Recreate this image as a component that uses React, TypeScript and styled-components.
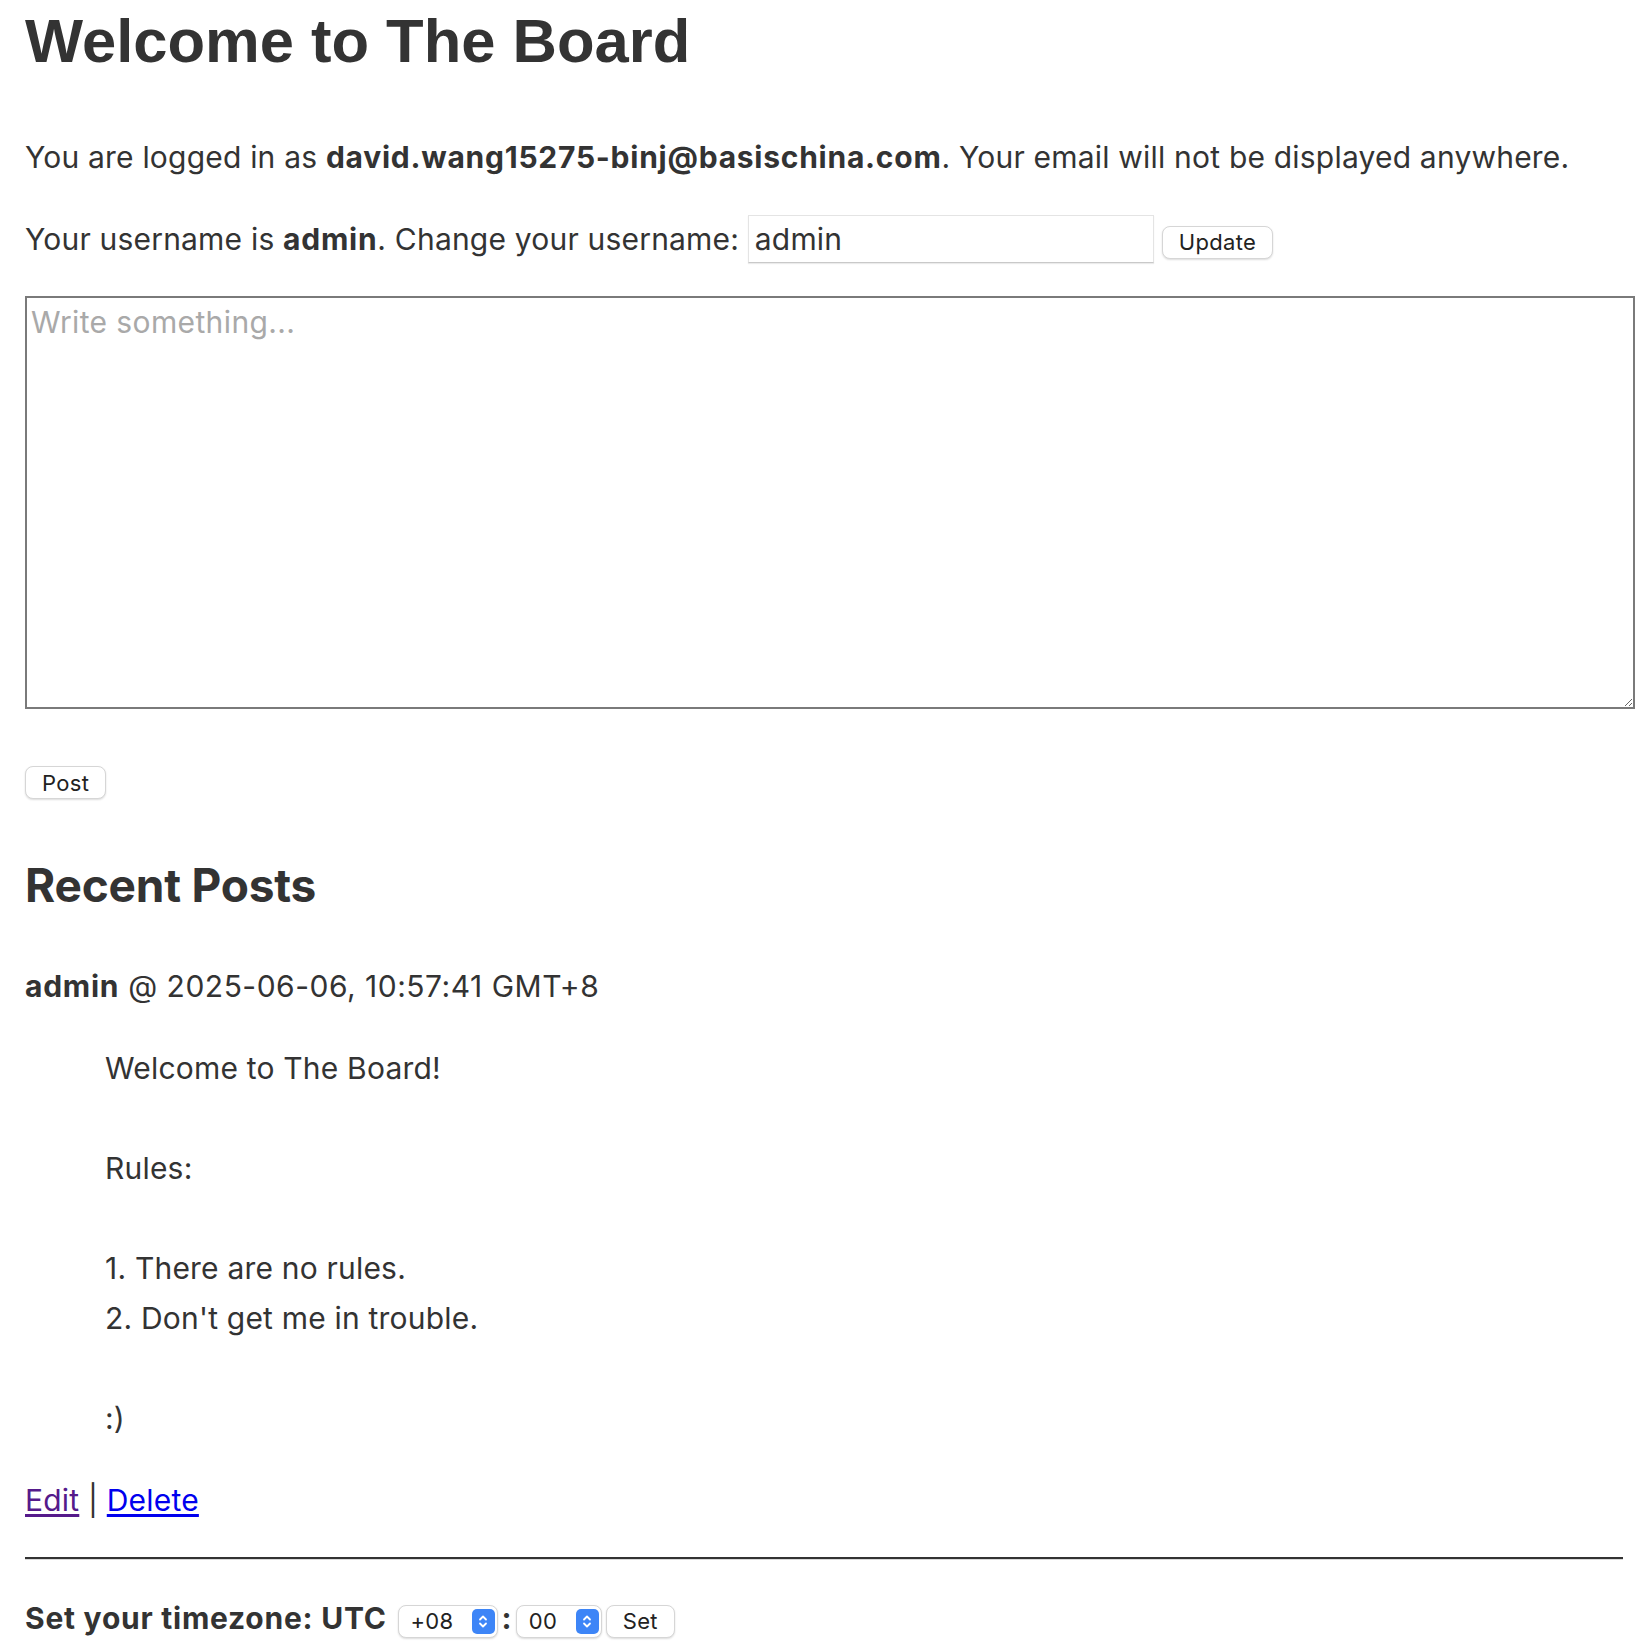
import React from 'react';
import styled, { createGlobalStyle } from 'styled-components';

const GlobalStyle = createGlobalStyle`
  body {
    margin: 0;
    background: #fff;
    color: #333;
    font-family: Inter, "Noto Sans", sans-serif;
    font-size: 30px;
    line-height: 50px;
    letter-spacing: 0.2px;
  }
`;

const Page = styled.div`
  display: flex;
  flex-direction: column;
  padding: 0 25px 20px;
`;

const Title = styled.h1`
  margin: 10px 0 0;
  font-family: 'Liberation Sans', Arial, sans-serif;
  font-size: 61.5px;
  line-height: 62px;
  font-weight: 700;
  letter-spacing: 0;
`;

const Text = styled.p`
  margin: 60px 0 0;
`;

const Row = styled.div<{ $top: number }>`
  display: flex;
  align-items: baseline;
  margin-top: ${(p) => p.$top}px;
`;

const Label = styled.span`
  white-space: pre;
`;

const Strong = styled.b`
  font-weight: 700;
  letter-spacing: 0.75px;
`;

const NameInput = styled.input`
  box-sizing: border-box;
  width: 406px;
  height: 48px;
  padding: 0 6px;
  border: 1px solid #e4e4e4;
  border-bottom-color: #c9c9c9;
  box-shadow: 0 1px 1px rgba(0, 0, 0, 0.08);
  font: inherit;
  line-height: normal;
  letter-spacing: inherit;
  color: #333;
  outline: none;
`;

const Button = styled.button<{ $gap?: number }>`
  box-sizing: border-box;
  height: 33px;
  margin-left: ${(p) => p.$gap ?? 0}px;
  padding: 0 16px;
  border: 1px solid #d6d6d6;
  border-radius: 8px;
  background: #fff;
  box-shadow: 0 1px 2px rgba(0, 0, 0, 0.14);
  font-family: Inter, sans-serif;
  font-size: 22px;
  line-height: normal;
  letter-spacing: 0.3px;
  color: #222;
`;

const PostButton = styled(Button)`
  align-self: flex-start;
  margin-top: 57px;
`;

const Editor = styled.textarea`
  box-sizing: border-box;
  width: calc(100% + 12px);
  height: 413px;
  margin-top: 32px;
  padding: 6px 4px;
  border: 2px solid #7a7a7a;
  font-family: Inter, sans-serif;
  font-size: 30px;
  line-height: normal;
  letter-spacing: 0.38px;
  color: #333;
  resize: vertical;
  outline: none;

  &::placeholder {
    color: #a9a9a9;
  }
`;

const SectionTitle = styled.h2`
  margin: 59px 0 0;
  font-size: 46px;
  line-height: 55px;
  font-weight: 700;
  letter-spacing: -0.2px;
`;

const PostHeader = styled.div`
  margin-top: 48px;
  letter-spacing: 0.5px;
`;

const PostBody = styled.blockquote`
  margin: 32px 0 0 80px;
  white-space: pre-wrap;
`;

const Actions = styled.div`
  margin-top: 32px;
`;

const Link = styled.a<{ $visited?: boolean }>`
  color: ${(p) => (p.$visited ? '#551a8b' : '#0000ee')};
  text-decoration: underline;
  text-underline-offset: 3px;
`;

const Divider = styled.hr`
  height: 0;
  margin: 32px 0 0;
  border: none;
  border-top: 2px solid #333;
  border-bottom: 1px solid #d9d9d9;
`;

const SelectWrap = styled.span<{ $width: number }>`
  position: relative;
  display: inline-flex;
  width: ${(p) => p.$width}px;
`;

const Select = styled.select`
  box-sizing: border-box;
  width: 100%;
  height: 33px;
  padding: 0 30px 0 12px;
  appearance: none;
  border: 1px solid #d6d6d6;
  border-radius: 8px;
  background: #fff;
  box-shadow: 0 1px 2px rgba(0, 0, 0, 0.14);
  font-family: Inter, sans-serif;
  font-size: 22px;
  letter-spacing: 0.3px;
  color: #222;
  outline: none;
`;

const Chevron = styled.span`
  position: absolute;
  right: 3px;
  top: 4px;
  display: flex;
  align-items: center;
  justify-content: center;
  width: 23px;
  height: 25px;
  border-radius: 5px;
  background: #3d85f7;
  pointer-events: none;
`;

const Colon = styled.b`
  margin: 0 4px;
`;

const ChevronIcon = () => (
  <Chevron>
    <svg width="12" height="17" viewBox="0 0 12 17" fill="none">
      <path d="M3 6.5L6 3.5L9 6.5" stroke="#fff" strokeWidth="1.8" strokeLinecap="round" strokeLinejoin="round" />
      <path d="M3 10.5L6 13.5L9 10.5" stroke="#fff" strokeWidth="1.8" strokeLinecap="round" strokeLinejoin="round" />
    </svg>
  </Chevron>
);

const body = `Welcome to The Board!

Rules:

1. There are no rules.
2. Don't get me in trouble.

:)`;

export default function App() {
  return (
    <Page>
      <GlobalStyle />
      <Title>Welcome to The Board</Title>
      <Text>
        You are logged in as <Strong>david.wang15275-binj@basischina.com</Strong>. Your email will
        not be displayed anywhere.
      </Text>
      <Row $top={32}>
        <Label>
          Your username is <Strong>admin</Strong>. Change your username:{' '}
        </Label>
        <NameInput defaultValue="admin" />
        <Button $gap={8}>Update</Button>
      </Row>
      <Editor placeholder="Write something..." />
      <PostButton>Post</PostButton>
      <SectionTitle>Recent Posts</SectionTitle>
      <PostHeader>
        <Strong>admin</Strong> @ 2025-06-06, 10:57:41 GMT+8
      </PostHeader>
      <PostBody>{body}</PostBody>
      <Actions>
        <Link href="#" $visited>
          Edit
        </Link>{' '}
        |{' '}
        <Link href="#">Delete</Link>
      </Actions>
      <Divider />
      <Row $top={33}>
        <Label>
          <Strong>Set your timezone: UTC </Strong>
        </Label>
        <SelectWrap $width={100} style={{ marginLeft: 3 }}>
          <Select defaultValue="+08">
            <option>+08</option>
          </Select>
          <ChevronIcon />
        </SelectWrap>
        <Colon>:</Colon>
        <SelectWrap $width={86}>
          <Select defaultValue="00">
            <option>00</option>
          </Select>
          <ChevronIcon />
        </SelectWrap>
        <Button $gap={4}>Set</Button>
      </Row>
    </Page>
  );
}
